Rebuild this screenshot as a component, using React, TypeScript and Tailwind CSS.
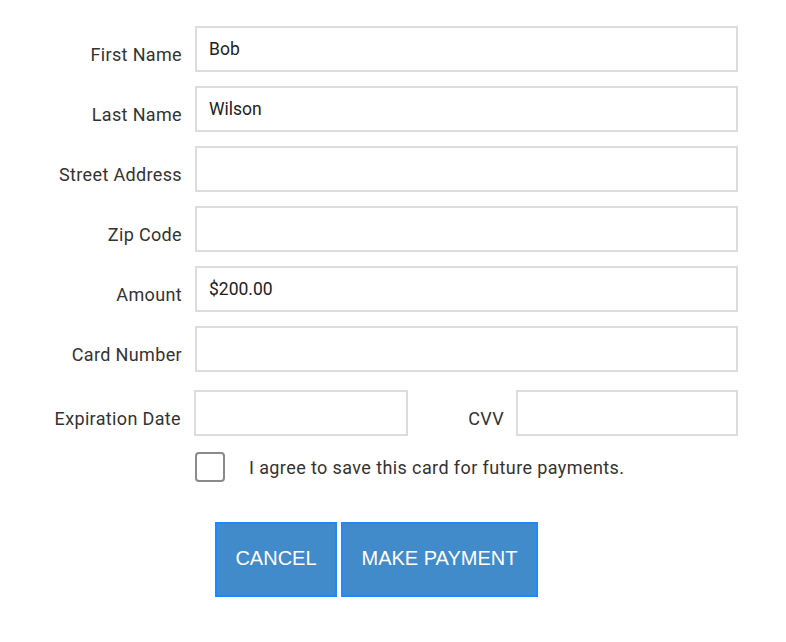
import React from "react";

const rows: { label: string; value: string }[] = [
  { label: "First Name", value: "Bob" },
  { label: "Last Name", value: "Wilson" },
  { label: "Street Address", value: "" },
  { label: "Zip Code", value: "" },
  { label: "Amount", value: "$200.00" },
  { label: "Card Number", value: "" },
];

export default function App() {
  return (
    <div
      className="w-[786px] h-[642px] bg-white text-[#333]"
      style={{ fontFamily: "Roboto, 'Liberation Sans', sans-serif" }}
    >
      <div className="pt-[26px] flex flex-col">
        {rows.map((r, i) => (
          <div key={i} className="flex items-center mb-[14px]">
            <label className="w-[182px] text-right text-[18px] tracking-[0.35px] pt-[10px] text-[#333] whitespace-nowrap">
              {r.label}
            </label>
            <div className="ml-[13px] w-[543px] h-[46px] border-2 border-[#dcdcdc] bg-white flex items-center px-[12px] pt-[1px] text-[17.5px] text-[#222]">
              {r.value}
            </div>
          </div>
        ))}
        <div className="flex items-center mt-[4px]">
          <label className="w-[181px] text-right text-[18px] tracking-[0.35px] pt-[10px] whitespace-nowrap">
            Expiration Date
          </label>
          <div className="ml-[13px] w-[214px] h-[46px] border-2 border-[#dcdcdc] bg-white" />
          <label className="w-[96px] text-right text-[18px] tracking-[0.35px] pt-[10px]">CVV</label>
          <div className="ml-[12px] w-[222px] h-[46px] border-2 border-[#dcdcdc] bg-white" />
        </div>
        <div className="flex items-center mt-[16px] ml-[195px]">
          <div className="w-[30px] h-[30px] border-2 border-[#8a8a8a] rounded-[4px] bg-white" />
          <span className="ml-[24px] text-[18px] text-[#333] tracking-[0.4px]">
            I agree to save this card for future payments.
          </span>
        </div>
        <div
          className="flex mt-[40px] ml-[215px] gap-[4px]"
          style={{ fontFamily: "'Liberation Sans', Arial, sans-serif" }}
        >
          <button className="w-[122px] h-[75px] pb-[3px] bg-[#428bca] border-2 border-[#1e88ff] text-white text-[20px]">
            CANCEL
          </button>
          <button className="w-[197px] h-[75px] pb-[3px] bg-[#428bca] border-2 border-[#1e88ff] text-white text-[20px]">
            MAKE PAYMENT
          </button>
        </div>
      </div>
    </div>
  );
}
